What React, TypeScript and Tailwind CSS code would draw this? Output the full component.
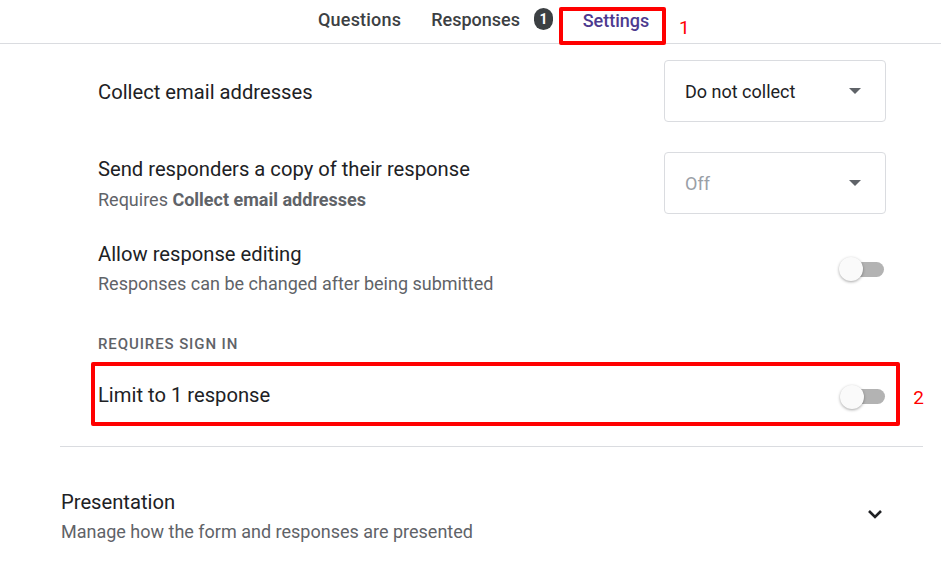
import React from "react";

function Toggle() {
  return (
    <div className="relative w-[47px] h-[25px] flex items-center">
      <div className="absolute left-[6px] right-[2px] h-[15px] rounded-full bg-[#b3b3b3]" />
      <div className="absolute left-0 w-[24px] h-[24px] rounded-full bg-[#fafafa] shadow-[0_1px_3px_rgba(0,0,0,0.35)]" />
    </div>
  );
}

function Dropdown({ label, disabled }: { label: string; disabled?: boolean }) {
  return (
    <div className="w-[222px] h-[62px] border border-[#dadce0] rounded-[4px] flex items-center justify-between pl-[20px] pr-[24px]">
      <span className={disabled ? "text-[#9aa0a6] text-[18px]" : "text-[#202124] text-[18px]"}>{label}</span>
      <svg width="12" height="6" viewBox="0 0 12 6">
        <path d="M0 0 L12 0 L6 6 Z" fill="#5f6368" />
      </svg>
    </div>
  );
}

export default function App() {
  return (
    <div className="w-[941px] h-[567px] bg-white overflow-hidden" style={{ fontFamily: "Roboto, 'Noto Sans', sans-serif" }}>
      <div className="h-[44px] border-b border-[#dadce0] flex items-start pl-[318px]">
        <span className="mt-[8px] leading-[24px] text-[18px] font-medium text-[#3c4043] tracking-[0.2px]">Questions</span>
        <span className="ml-[30px] mt-[8px] leading-[24px] text-[18px] font-medium text-[#3c4043]">Responses</span>
        <span className="ml-[14px] mt-[8px] w-[19px] h-[22px] rounded-[10px] bg-[#3c4043] text-white text-[14px] font-bold flex items-center justify-center">1</span>
        <div className="ml-[6px] mt-[7px] w-[107px] h-[38px] border-[4px] border-[#ff0000] rounded-[2px] flex justify-center pl-[7px]">
          <span className="-mt-[2px] leading-[24px] text-[18px] font-medium text-[#4d3a8f]">Settings</span>
        </div>
        <span className="ml-[13px] mt-[16px] leading-[24px] text-[19px] text-[#ff0000]">1</span>
      </div>

      <div className="ml-[60px] w-[863px]">
        <div className="pl-[38px] pr-[37px] border-b border-[#dadce0] pb-[20px]">
          <div className="mt-[16px] h-[62px] flex items-center justify-between">
            <span className="text-[20.2px] leading-[30px] text-[#202124] mt-[1px]">Collect email addresses</span>
            <Dropdown label="Do not collect" />
          </div>
          <div className="mt-[30px] h-[62px] flex items-center justify-between">
            <div className="flex flex-col mt-[2px]">
              <span className="text-[20.2px] leading-[30px] text-[#202124]">Send responders a copy of their response</span>
              <span className="text-[18px] leading-[30px] text-[#5f6368] mt-[1px]">
                Requires <b className="font-bold">Collect email addresses</b>
              </span>
            </div>
            <Dropdown label="Off" disabled />
          </div>
          <div className="mt-[25px] h-[60px] flex items-center justify-between">
            <div className="flex flex-col">
              <span className="text-[20.2px] leading-[30px] text-[#202124]">Allow response editing</span>
              <span className="text-[18px] leading-[30px] text-[#5f6368]">Responses can be changed after being submitted</span>
            </div>
            <Toggle />
          </div>
          <div className="mt-[35px] h-[20px] flex items-center text-[15px] font-medium tracking-[0.9px] text-[#5f6368]">REQUIRES SIGN IN</div>
          <div className="relative mt-[8px] -ml-[7px] -mr-[14px] h-[64px] border-[4px] border-[#ff0000] rounded-[2px] flex items-center justify-between pl-[3px] pr-[9px]">
            <span className="text-[20.2px] leading-[30px] text-[#202124] mt-[1px]">Limit to 1 response</span>
            <div className="mt-[5px]">
              <Toggle />
            </div>
            <span className="absolute -right-[28px] top-[20px] leading-[24px] text-[19px] text-[#ff0000]">2</span>
          </div>
        </div>
        <div className="pl-[1px] pr-[40px] mt-[40px] flex items-center justify-between">
          <div className="flex flex-col">
            <span className="text-[20.2px] leading-[30px] text-[#202124]">Presentation</span>
            <span className="text-[18px] leading-[30px] text-[#5f6368]">Manage how the form and responses are presented</span>
          </div>
          <svg width="16" height="10" viewBox="0 0 16 10" className="-mt-[6px]">
            <path d="M2 2 L8 8 L14 2" stroke="#202124" strokeWidth="2.6" fill="none" />
          </svg>
        </div>
      </div>
    </div>
  );
}
